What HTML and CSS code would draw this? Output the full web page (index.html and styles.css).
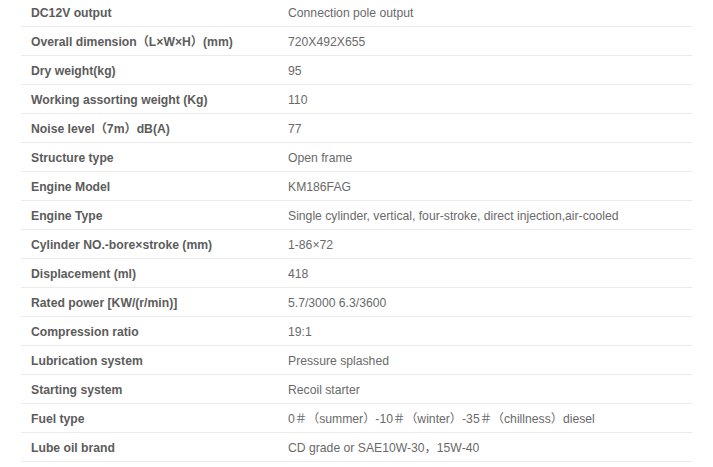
FILE: index.html
```html
<!DOCTYPE html>
<html>
<head>
<meta charset="utf-8">
<link rel="stylesheet" href="styles.css">
</head>
<body>
<div class="spec">
<div class="row"><span class="k">DC12V output</span><span class="v">Connection pole output</span></div>
<div class="row"><span class="k">Overall dimension（L×W×H）(mm)</span><span class="v">720X492X655</span></div>
<div class="row"><span class="k">Dry weight(kg)</span><span class="v">95</span></div>
<div class="row"><span class="k">Working assorting weight (Kg)</span><span class="v">110</span></div>
<div class="row"><span class="k">Noise level（7m）dB(A)</span><span class="v">77</span></div>
<div class="row"><span class="k">Structure type</span><span class="v">Open frame</span></div>
<div class="row"><span class="k">Engine Model</span><span class="v">KM186FAG</span></div>
<div class="row"><span class="k">Engine Type</span><span class="v">Single cylinder, vertical, four-stroke, direct injection,air-cooled</span></div>
<div class="row"><span class="k">Cylinder NO.-bore×stroke (mm)</span><span class="v">1-86×72</span></div>
<div class="row"><span class="k">Displacement (ml)</span><span class="v">418</span></div>
<div class="row"><span class="k">Rated power [KW/(r/min)]</span><span class="v">5.7/3000 6.3/3600</span></div>
<div class="row"><span class="k">Compression ratio</span><span class="v">19:1</span></div>
<div class="row"><span class="k">Lubrication system</span><span class="v">Pressure splashed</span></div>
<div class="row"><span class="k">Starting system</span><span class="v">Recoil starter</span></div>
<div class="row"><span class="k">Fuel type</span><span class="v">0＃（summer）-10＃（winter）-35＃（chillness）diesel</span></div>
<div class="row"><span class="k">Lube oil brand</span><span class="v">CD grade or SAE10W-30，15W-40</span></div>
</div>
</body>
</html>
```
FILE: styles.css
```css
html, body {
  margin: 0;
  padding: 0;
  background: #fff;
}
body {
  padding: 0 21px;
  font-family: "Liberation Sans", Arial, "Noto Sans CJK SC", sans-serif;
  font-size: 12.2px;
}
.spec {
  width: 671px;
  margin-top: -2px;
}
.row {
  display: grid;
  grid-template-columns: 257px 1fr;
  align-items: center;
  height: 29px;
  box-sizing: border-box;
  padding-top: 2px;
  border-bottom: 1px solid #ebebeb;
  line-height: 14px;
  white-space: nowrap;
}
.k {
  padding-left: 10px;
  font-weight: bold;
  color: #5c5c5c;
}
.v {
  padding-left: 10px;
  color: #6a6a6a;
}
```
